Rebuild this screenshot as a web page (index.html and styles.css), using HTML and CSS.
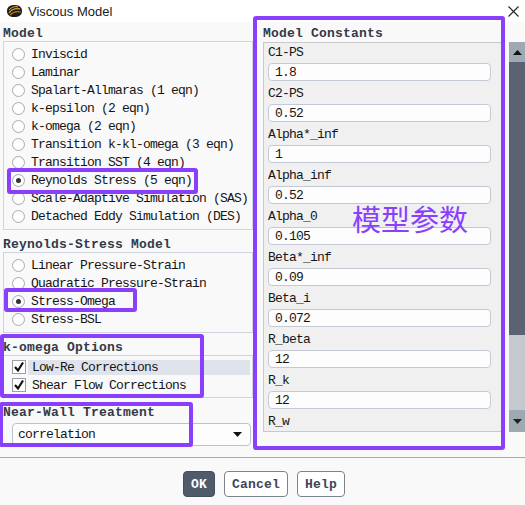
FILE: index.html
```html
<!DOCTYPE html>
<html lang="zh">
  <head>
    <meta charset="UTF-8" />
    <meta name="viewport" content="width=device-width, initial-scale=1.0" />
    <title>Viscous Model</title>
    <link rel="stylesheet" href="styles.css">
  </head>
  <body>
    <!-- 标题栏 -->
    <div class="titlebar">
      <svg class="app-icon" width="17" height="14" viewBox="0 0 17 14">
        <path d="M1 7 C1 2 5 1 9 1 C14 1 16 4 16 7 C16 11 13 13 8 13 C4 13 1 11 1 7 Z" fill="#1b1b1b" />
        <path d="M3 9 C6 5 10 4 14 5" stroke="#d99a2b" stroke-width="1.3" fill="none" />
        <path d="M4 11 C7 8 11 7 15 8" stroke="#b8761c" stroke-width="1.1" fill="none" />
        <path d="M3 6 C6 3 9 2 12 3" stroke="#f0c050" stroke-width="1" fill="none" />
      </svg>
      <span class="title">Viscous Model</span>
      <svg class="close" width="11" height="11" viewBox="0 0 11 11">
        <path d="M0.5 0.5 L10.5 10.5 M10.5 0.5 L0.5 10.5" stroke="#222" stroke-width="1.1" />
      </svg>
    </div>

    <div class="main">
      <!-- 左侧：模型选择 -->
      <div class="left">
        <div class="heading">Model</div>
        <div class="group">
          <div class="item"><span class="radio"></span>Inviscid</div>
          <div class="item"><span class="radio"></span>Laminar</div>
          <div class="item"><span class="radio"></span>Spalart-Allmaras (1 eqn)</div>
          <div class="item"><span class="radio"></span>k-epsilon (2 eqn)</div>
          <div class="item"><span class="radio"></span>k-omega (2 eqn)</div>
          <div class="item"><span class="radio"></span>Transition k-kl-omega (3 eqn)</div>
          <div class="item"><span class="radio"></span>Transition SST (4 eqn)</div>
          <div class="item"><span class="radio on"></span>Reynolds Stress (5 eqn)</div>
          <div class="item"><span class="radio"></span>Scale-Adaptive Simulation (SAS)</div>
          <div class="item"><span class="radio"></span>Detached Eddy Simulation (DES)</div>
        </div>

        <div class="heading gap">Reynolds-Stress Model</div>
        <div class="group">
          <div class="item"><span class="radio"></span>Linear Pressure-Strain</div>
          <div class="item"><span class="radio"></span>Quadratic Pressure-Strain</div>
          <div class="item"><span class="radio on"></span>Stress-Omega</div>
          <div class="item"><span class="radio"></span>Stress-BSL</div>
        </div>

        <div class="heading gap">k-omega Options</div>
        <div class="group options">
          <div class="check-row">
            <span class="checkbox">
              <svg width="12" height="12" viewBox="0 0 12 12"><path d="M2 6 L5 9.5 L10 1.5" stroke="#111" stroke-width="2.2" fill="none" /></svg>
            </span>
            <span class="check-label selected">Low-Re Corrections</span>
          </div>
          <div class="check-row">
            <span class="checkbox">
              <svg width="12" height="12" viewBox="0 0 12 12"><path d="M2 6 L5 9.5 L10 1.5" stroke="#111" stroke-width="2.2" fill="none" /></svg>
            </span>
            <span class="check-label">Shear Flow Corrections</span>
          </div>
        </div>

        <div class="heading gap">Near-Wall Treatment</div>
        <div class="dropdown">
          <span>correlation</span>
          <svg width="9" height="5" viewBox="0 0 9 5"><path d="M0 0 L9 0 L4.5 5 Z" fill="#111" /></svg>
        </div>
      </div>

      <!-- 右侧：模型常数 -->
      <div class="right">
        <div class="heading">Model Constants</div>
        <div class="const-area">
          <div class="const-box">
            <div class="field"><div class="label">C1-PS</div><input class="value" value="1.8" /></div>
            <div class="field"><div class="label">C2-PS</div><input class="value" value="0.52" /></div>
            <div class="field"><div class="label">Alpha*_inf</div><input class="value" value="1" /></div>
            <div class="field"><div class="label">Alpha_inf</div><input class="value" value="0.52" /></div>
            <div class="field"><div class="label">Alpha_0</div><input class="value" value="0.105" /></div>
            <div class="field"><div class="label">Beta*_inf</div><input class="value" value="0.09" /></div>
            <div class="field"><div class="label">Beta_i</div><input class="value" value="0.072" /></div>
            <div class="field"><div class="label">R_beta</div><input class="value" value="12" /></div>
            <div class="field"><div class="label">R_k</div><input class="value" value="12" /></div>
            <div class="field"><div class="label">R_w</div><input class="value" value="2.95" /></div>
          </div>
          <div class="scrollbar">
            <div class="scroll-btn up"><svg width="9" height="5" viewBox="0 0 9 5"><path d="M0 5 L9 5 L4.5 0 Z" fill="#111" /></svg></div>
            <div class="scroll-thumb"></div>
            <div class="scroll-track"></div>
            <div class="scroll-btn down"><svg width="9" height="5" viewBox="0 0 9 5"><path d="M0 0 L9 0 L4.5 5 Z" fill="#222" /></svg></div>
          </div>
        </div>
      </div>
    </div>

    <div class="footer">
      <button class="btn primary">OK</button>
      <button class="btn">Cancel</button>
      <button class="btn">Help</button>
    </div>

    <!-- 标注框 -->
    <div class="mark mark-constants"></div>
    <div class="mark mark-rsm"></div>
    <div class="mark mark-omega"></div>
    <div class="mark mark-options"></div>
    <div class="mark mark-wall"></div>
    <div class="mark-text">模型参数</div>
  </body>
</html>
```

FILE: styles.css
```css
body {
  margin: 0;
  width: 525px;
  height: 505px;
  overflow: hidden;
  position: relative;
  background-color: #f9f9f9;
  font-family: "Liberation Mono", "DejaVu Sans Mono", monospace;
  font-size: 13px;
  letter-spacing: -0.8px;
  color: #151515;
}

/* 标题栏 */
.titlebar {
  height: 22px;
  background: #ffffff;
  display: flex;
  align-items: center;
}

.app-icon {
  margin-left: 6px;
}

.title {
  margin-left: 5px;
  font-family: "Liberation Sans", Arial, sans-serif;
  font-size: 13px;
  letter-spacing: 0;
  color: #1a1a1a;
}

.close {
  margin-left: auto;
  margin-right: 6px;
}

/* 主体两栏 */
.main {
  height: 435px;
  display: flex;
}

.left {
  width: 250px;
  margin-left: 3px;
}

.right {
  margin-left: 10px;
}

.heading {
  margin-top: 5px;
  height: 14px;
  line-height: 14px;
  font-weight: bold;
  letter-spacing: 0.2px;
  color: #333a47;
}

.heading.gap {
  margin-top: 8px;
}

.group {
  border: 1px solid #d0d5dd;
  padding: 3px 0 4px;
}

.item {
  height: 18px;
  display: flex;
  align-items: center;
}

.radio {
  width: 13px;
  height: 13px;
  box-sizing: border-box;
  margin: 0 6px 0 8px;
  border: 1px solid #a9adb3;
  border-radius: 50%;
  background: radial-gradient(circle, #ffffff 50%, #f1f1f1);
  display: flex;
  align-items: center;
  justify-content: center;
}

.radio.on::after {
  content: "";
  width: 5px;
  height: 5px;
  border-radius: 50%;
  background-color: #333;
}

.options {
  padding: 2px 0 3px;
}

.check-row {
  height: 18px;
  display: flex;
  align-items: center;
}

.checkbox {
  width: 14px;
  height: 14px;
  box-sizing: border-box;
  margin-left: 8px;
  border: 1px solid #9a9ea5;
  background: #fff;
  display: flex;
  align-items: center;
  justify-content: center;
}

.check-label {
  flex: 1;
  margin: 0 2px 0 2px;
  padding-left: 4px;
  line-height: 15px;
}

.check-label.selected {
  background-color: #dfe4ec;
}

.dropdown {
  margin: 3px 2px 0 9px;
  height: 23px;
  box-sizing: border-box;
  border: 1px solid #bcc3ce;
  border-radius: 4px;
  background: #fdfdfd;
  padding: 0 8px 0 5px;
  display: flex;
  align-items: center;
  justify-content: space-between;
}

/* 模型常数 */
.const-area {
  margin-top: 1px;
  display: flex;
  gap: 6px;
}

.const-box {
  width: 240px;
  height: 390px;
  box-sizing: border-box;
  overflow: hidden;
  border: 1px solid #c9c9c9;
  background-color: #f0f0f0;
  padding: 0 4px;
}

.label {
  height: 20px;
  line-height: 20px;
  padding-top: 3px;
}

.field:first-child .label {
  padding-top: 0;
}

.value {
  display: block;
  width: 223px;
  height: 18px;
  box-sizing: border-box;
  margin: 0;
  padding: 0 6px;
  border: 1px solid #c3cad6;
  border-radius: 4px;
  background: #fdfdfd;
  font: inherit;
  letter-spacing: inherit;
  color: #151515;
}

.scrollbar {
  width: 16px;
  height: 390px;
  display: flex;
  flex-direction: column;
}

.scroll-btn {
  display: flex;
  align-items: center;
  justify-content: center;
  background-color: #9ea9b2;
}

.scroll-btn.up {
  height: 20px;
}

.scroll-btn.down {
  height: 22px;
}

.scroll-thumb {
  height: 273px;
  background-color: #5b6372;
}

.scroll-track {
  flex: 1;
  background-color: #c3c9cf;
}

/* 底部按钮 */
.footer {
  border-top: 1px solid #a9a9a9;
  padding: 13px 0 0 3px;
  display: flex;
  justify-content: center;
  gap: 9px;
}

.btn {
  height: 26px;
  padding: 0 7px;
  border: 1px solid #7b8391;
  border-radius: 4px;
  background: #ffffff;
  font: inherit;
  font-weight: bold;
  letter-spacing: 0.2px;
  color: #3d4656;
}

.btn.primary {
  background-color: #4f5a6a;
  border-color: #434d5c;
  color: #ffffff;
}

/* 紫色标注 */
.mark {
  position: absolute;
  box-sizing: border-box;
  border: 4px solid #8a3ffc;
  border-radius: 3px;
}

.mark-constants {
  left: 253px;
  top: 16px;
  width: 252px;
  height: 434px;
}

.mark-rsm {
  left: 7px;
  top: 168px;
  width: 191px;
  height: 26px;
}

.mark-omega {
  left: 4px;
  top: 288px;
  width: 133px;
  height: 24px;
}

.mark-options {
  left: 0;
  top: 334px;
  width: 204px;
  height: 64px;
}

.mark-wall {
  left: -1px;
  top: 402px;
  width: 194px;
  height: 45px;
}

.mark-text {
  position: absolute;
  left: 352px;
  top: 201px;
  font-family: "Noto Sans CJK SC", sans-serif;
  font-size: 29px;
  line-height: 34px;
  letter-spacing: 0;
  color: #8a3ffc;
}
```
